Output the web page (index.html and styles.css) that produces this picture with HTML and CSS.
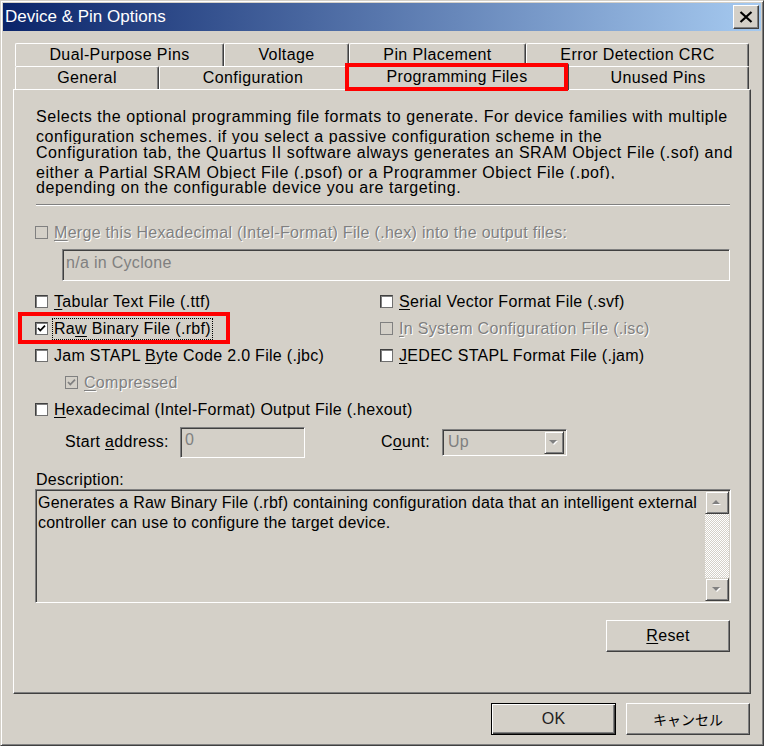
FILE: index.html
```html
<!DOCTYPE html>
<html>
<head>
<meta charset="utf-8">
<link rel="stylesheet" href="styles.css">
</head>
<body>
<div class="window">
  <div class="titlebar">
    <span class="title">Device &amp; Pin Options</span>
    <div class="close">
      <svg width="14" height="12" viewBox="0 0 14 12"><path d="M1.5 1 L12.5 11 M12.5 1 L1.5 11" stroke="#000" stroke-width="2.2" fill="none"/></svg>
    </div>
  </div>
  <div class="client">
    <div class="tabs">
      <div class="tabrow">
        <div class="tab t-dual">Dual-Purpose Pins</div>
        <div class="tab t-volt">Voltage</div>
        <div class="tab t-pin">Pin Placement</div>
        <div class="tab t-err">Error Detection CRC</div>
      </div>
      <div class="tabrow">
        <div class="tab t-gen">General</div>
        <div class="tab t-conf">Configuration</div>
        <div class="tab t-prog sel">Programming Files</div>
        <div class="tab t-unused">Unused Pins</div>
      </div>
    </div>
    <div class="panel">
      <div class="desc">
        <div class="dl l1">Selects the optional programming file formats to generate. For device families with multiple</div>
        <div class="dl l2">configuration schemes. if you select a passive configuration scheme in the</div>
        <div class="dl l3">Configuration tab, the Quartus II software always generates an SRAM Object File (.sof) and</div>
        <div class="dl l4">either a Partial SRAM Object File (.psof) or a Programmer Object File (.pof),</div>
        <div class="dl l5">depending on the configurable device you are targeting.</div>
      </div>
      <div class="sep"></div>
      <div class="cb merge disabled"><span class="box"></span><span class="lbl"><u>M</u>erge this Hexadecimal (Intel-Format) File (.hex) into the output files:</span></div>
      <div class="na">n/a in Cyclone</div>
      <div class="grid">
        <div class="cb"><span class="box"></span><span class="lbl"><u>T</u>abular Text File (.ttf)</span></div>
        <div class="cb"><span class="box"></span><span class="lbl"><u>S</u>erial Vector Format File (.svf)</span></div>
        <div class="cb raw"><span class="box"><svg width="9" height="9" viewBox="0 0 9 9"><path d="M1 4 L3.3 6.5 L8 1.6" stroke="#000" stroke-width="1.8" fill="none"/></svg></span><span class="lbl focus">Ra<u>w</u> Binary File (.rbf)</span></div>
        <div class="cb disabled"><span class="box"></span><span class="lbl"><u>I</u>n System Configuration File (.isc)</span></div>
        <div class="cb"><span class="box"></span><span class="lbl">Jam STAPL <u>B</u>yte Code 2.0 File (.jbc)</span></div>
        <div class="cb"><span class="box"></span><span class="lbl"><u>J</u>EDEC STAPL Format File (.jam)</span></div>
        <div class="cb disabled indent"><span class="box"><svg width="9" height="9" viewBox="0 0 9 9"><path d="M1 4 L3.3 6.5 L8 1.6" stroke="#808080" stroke-width="1.8" fill="none"/></svg></span><span class="lbl"><u>C</u>ompressed</span></div>
        <div></div>
        <div class="cb span2"><span class="box"></span><span class="lbl"><u>H</u>exadecimal (Intel-Format) Output File (.hexout)</span></div>
      </div>
      <div class="addr">
        <span class="addr-lbl">Start <u>a</u>ddress:</span>
        <div class="field">0</div>
        <span class="count-lbl">C<u>o</u>unt:</span>
        <div class="combo">
          <span class="combo-text">Up</span>
          <div class="combo-btn">
            <svg width="10" height="6" viewBox="0 0 10 6"><polygon points="1,1 9,1 5,5" fill="#fff"/><polygon points="0,0 8,0 4,4" fill="#808080"/></svg>
          </div>
        </div>
      </div>
      <div class="desclabel">Description:</div>
      <div class="ta">
        <div class="ta-text">Generates a Raw Binary File (.rbf) containing configuration data that an intelligent external<br>controller can use to configure the target device.</div>
        <div class="sb">
          <div class="sb-btn"><svg width="10" height="6" viewBox="0 0 10 6"><polygon points="5,1 9,5 1,5" fill="#fff"/><polygon points="4,0 8,4 0,4" fill="#808080"/></svg></div>
          <div class="sb-track"></div>
          <div class="sb-btn"><svg width="10" height="6" viewBox="0 0 10 6"><polygon points="1,1 9,1 5,5" fill="#fff"/><polygon points="0,0 8,0 4,4" fill="#808080"/></svg></div>
        </div>
      </div>
      <div class="reset-row">
        <div class="btn btn-reset"><span><u>R</u>eset</span></div>
      </div>
    </div>
    <div class="buttons">
      <div class="btn btn-ok">OK</div>
      <div class="btn btn-cancel">キャンセル</div>
    </div>
  </div>
</div>
</body>
</html>
```
FILE: styles.css
```css
*, *::before, *::after { box-sizing: border-box; }
html, body { margin: 0; padding: 0; }
body {
  width: 764px;
  height: 746px;
  overflow: hidden;
  background: #d4d0c8;
  font-family: "Liberation Sans", Arial, sans-serif;
  font-size: 16px;
  letter-spacing: 0.3px;
  color: #000;
}
u { text-decoration: underline; text-underline-offset: 2px; }

.window {
  width: 764px;
  height: 746px;
  border: 1px solid;
  border-color: #d4d0c8 #404040 #404040 #d4d0c8;
  box-shadow: inset 1px 1px #fff, inset -1px -1px #808080;
  padding: 2px;
  display: flex;
  flex-direction: column;
  background: #d4d0c8;
}

.titlebar {
  height: 28px;
  flex: none;
  background: linear-gradient(to right, #0a246a, #a6caf0);
  display: flex;
  align-items: center;
  justify-content: space-between;
  padding: 0 2px 0 2px;
}
.title {
  color: #fff;
  font-size: 17px;
  letter-spacing: 0;
  line-height: 20px;
  white-space: nowrap;
}
.close {
  width: 26px;
  height: 24px;
  background: #d4d0c8;
  border: 1px solid;
  border-color: #fff #404040 #404040 #fff;
  box-shadow: inset -1px -1px #808080;
  display: flex;
  align-items: center;
  justify-content: center;
}

.client {
  flex: 1;
  padding: 12px 10px 0 10px;
}

.tabs {
  position: relative;
  z-index: 1;
  margin-left: 2px;
  width: 734px;
}
.tabrow {
  display: flex;
  height: 23px;
}
.tab {
  height: 23px;
  flex: none;
  background: #d4d0c8;
  border-top: 1px solid #fff;
  border-left: 1px solid #fff;
  border-right: 1px solid #404040;
  box-shadow: inset -1px 0 #808080;
  border-radius: 2px 2px 0 0;
  display: flex;
  align-items: center;
  justify-content: center;
  white-space: nowrap;
  font-size: 16px;
  letter-spacing: 0.4px;
  line-height: 20px;
}
.t-dual { width: 209px; }
.t-volt { width: 125px; }
.t-pin { width: 177px; }
.t-err { width: 223px; }
.t-gen { width: 144px; }
.t-conf { width: 188px; }
.t-prog { width: 220px; }
.t-unused { width: 182px; }
.tab.sel {
  width: 224px;
  height: 27px;
  margin: -3px -2px -1px -2px;
  position: relative;
  z-index: 2;
}
.tab.sel::after {
  content: "";
  position: absolute;
  left: -1px;
  top: -1px;
  right: 0;
  bottom: -1px;
  border: 4px solid #ff0000;
}

.panel {
  position: relative;
  width: 738px;
  height: 605px;
  background: #d4d0c8;
  border-top: 1px solid #fff;
  border-left: 1px solid #fff;
  border-right: 1px solid #404040;
  border-bottom: 1px solid #404040;
  box-shadow: inset -1px -1px #808080;
  padding: 17px 20px 0 21px;
}

.dl {
  white-space: nowrap;
  padding-left: 1px;
  letter-spacing: 0.55px;
}
.l1 { height: 20px; line-height: 20px; }
.l2 { height: 17px; line-height: 20px; overflow: hidden; }
.l3 { height: 18px; line-height: 18px; }
.l4 { height: 17px; line-height: 22px; overflow: hidden; }
.l5 { height: 18px; line-height: 18px; }

.sep {
  margin-top: 7px;
  margin-left: 1px;
  height: 2px;
  border-top: 1px solid #808080;
  border-bottom: 1px solid #fff;
}

.cb {
  display: flex;
  align-items: center;
  height: 27px;
  white-space: nowrap;
  position: relative;
}
.merge { margin-top: 13px; }
.box {
  width: 13px;
  height: 13px;
  flex: none;
  margin-right: 6px;
  background: #fff;
  border: 1px solid #404040;
  border-right-color: #707070;
  border-bottom-color: #707070;
  box-shadow: inset 1px 1px #808080;
  display: flex;
  align-items: center;
  justify-content: center;
}
.lbl { line-height: 18px; }
.disabled .box {
  background: #d4d0c8;
  border-color: #808080;
  box-shadow: none;
}
.disabled .lbl {
  color: #808080;
  text-shadow: 1px 1px 0 #fff;
}
.focus {
  outline: 1px dotted #000;
  padding: 1px 1px;
  margin-left: -1px;
}
.raw::after {
  content: "";
  position: absolute;
  left: -17px;
  top: -3px;
  width: 212px;
  height: 32px;
  border: 4px solid #ff0000;
}

.na {
  margin: 3px 0 0 27px;
  height: 32px;
  border: 1px solid;
  border-color: #808080 #fff #fff #808080;
  box-shadow: inset 1px 1px #404040, inset -1px -1px #d4d0c8;
  padding: 3px 0 0 3px;
  line-height: 20px;
  color: #808080;
}

.grid {
  margin-top: 7px;
  display: grid;
  grid-template-columns: 345px 1fr;
  grid-auto-rows: 27px;
}
.indent { padding-left: 30px; }
.span2 { grid-column: 1 / 3; }

.addr {
  margin-top: 3px;
  height: 32px;
  display: flex;
  align-items: center;
  padding-left: 30px;
}
.addr-lbl { width: 115px; flex: none; white-space: nowrap; }
.field {
  width: 125px;
  height: 31px;
  flex: none;
  border: 1px solid;
  border-color: #808080 #fff #fff #808080;
  box-shadow: inset 1px 1px #404040, inset -1px -1px #d4d0c8;
  padding: 2px 0 0 4px;
  line-height: 20px;
  color: #808080;
}
.count-lbl { margin-left: 76px; width: 61px; flex: none; white-space: nowrap; }
.combo {
  width: 125px;
  height: 27px;
  flex: none;
  border: 1px solid;
  border-color: #808080 #fff #fff #808080;
  box-shadow: inset 1px 1px #404040, inset -1px -1px #d4d0c8;
  padding: 2px;
  display: flex;
  align-items: center;
}
.combo-text { flex: 1; color: #808080; padding-left: 3px; line-height: 20px; }
.combo-btn {
  width: 20px;
  height: 23px;
  border: 1px solid;
  border-color: #d4d0c8 #404040 #404040 #d4d0c8;
  box-shadow: inset 1px 1px #fff, inset -1px -1px #808080;
  display: flex;
  align-items: center;
  justify-content: center;
  padding-top: 1px;
}

.desclabel {
  margin-top: 12px;
  height: 19px;
  line-height: 19px;
  padding-left: 1px;
}
.ta {
  height: 114px;
  margin-right: -1px;
  display: flex;
  border: 1px solid;
  border-color: #808080 #fff #fff #808080;
  box-shadow: inset 1px 1px #404040, inset -1px -1px #d4d0c8;
  padding: 1px;
}
.ta-text {
  flex: 1;
  padding: 2px 0 0 1px;
  line-height: 20px;
  white-space: nowrap;
  letter-spacing: 0.22px;
}
.sb {
  width: 24px;
  flex: none;
  display: flex;
  flex-direction: column;
}
.sb-btn {
  height: 23px;
  flex: none;
  background: #d4d0c8;
  border: 1px solid;
  border-color: #d4d0c8 #404040 #404040 #d4d0c8;
  box-shadow: inset 1px 1px #fff, inset -1px -1px #808080;
  display: flex;
  align-items: center;
  justify-content: center;
}
.sb-track {
  flex: 1;
  background: repeating-conic-gradient(#fff 0 25%, #d4d0c8 0 50%) 0 0 / 2px 2px;
}

.reset-row {
  margin-top: 17px;
  display: flex;
  justify-content: flex-end;
}
.btn {
  height: 32px;
  flex: none;
  background: #d4d0c8;
  border: 1px solid;
  border-color: #fff #404040 #404040 #fff;
  box-shadow: inset -1px -1px #808080;
  display: flex;
  align-items: center;
  justify-content: center;
  white-space: nowrap;
}
.btn-reset { width: 124px; }

.buttons {
  margin-top: 9px;
  padding-right: 1px;
  display: flex;
  justify-content: flex-end;
  gap: 10px;
}
.btn-ok {
  width: 125px;
  border-color: #000;
  box-shadow: inset 1px 1px #fff, inset -1px -1px #404040, inset -2px -2px #808080;
  color: #222;
}
.btn-cancel {
  width: 124px;
  font-family: "Noto Sans CJK JP", sans-serif;
  font-size: 14px;
  letter-spacing: 0;
}
```
